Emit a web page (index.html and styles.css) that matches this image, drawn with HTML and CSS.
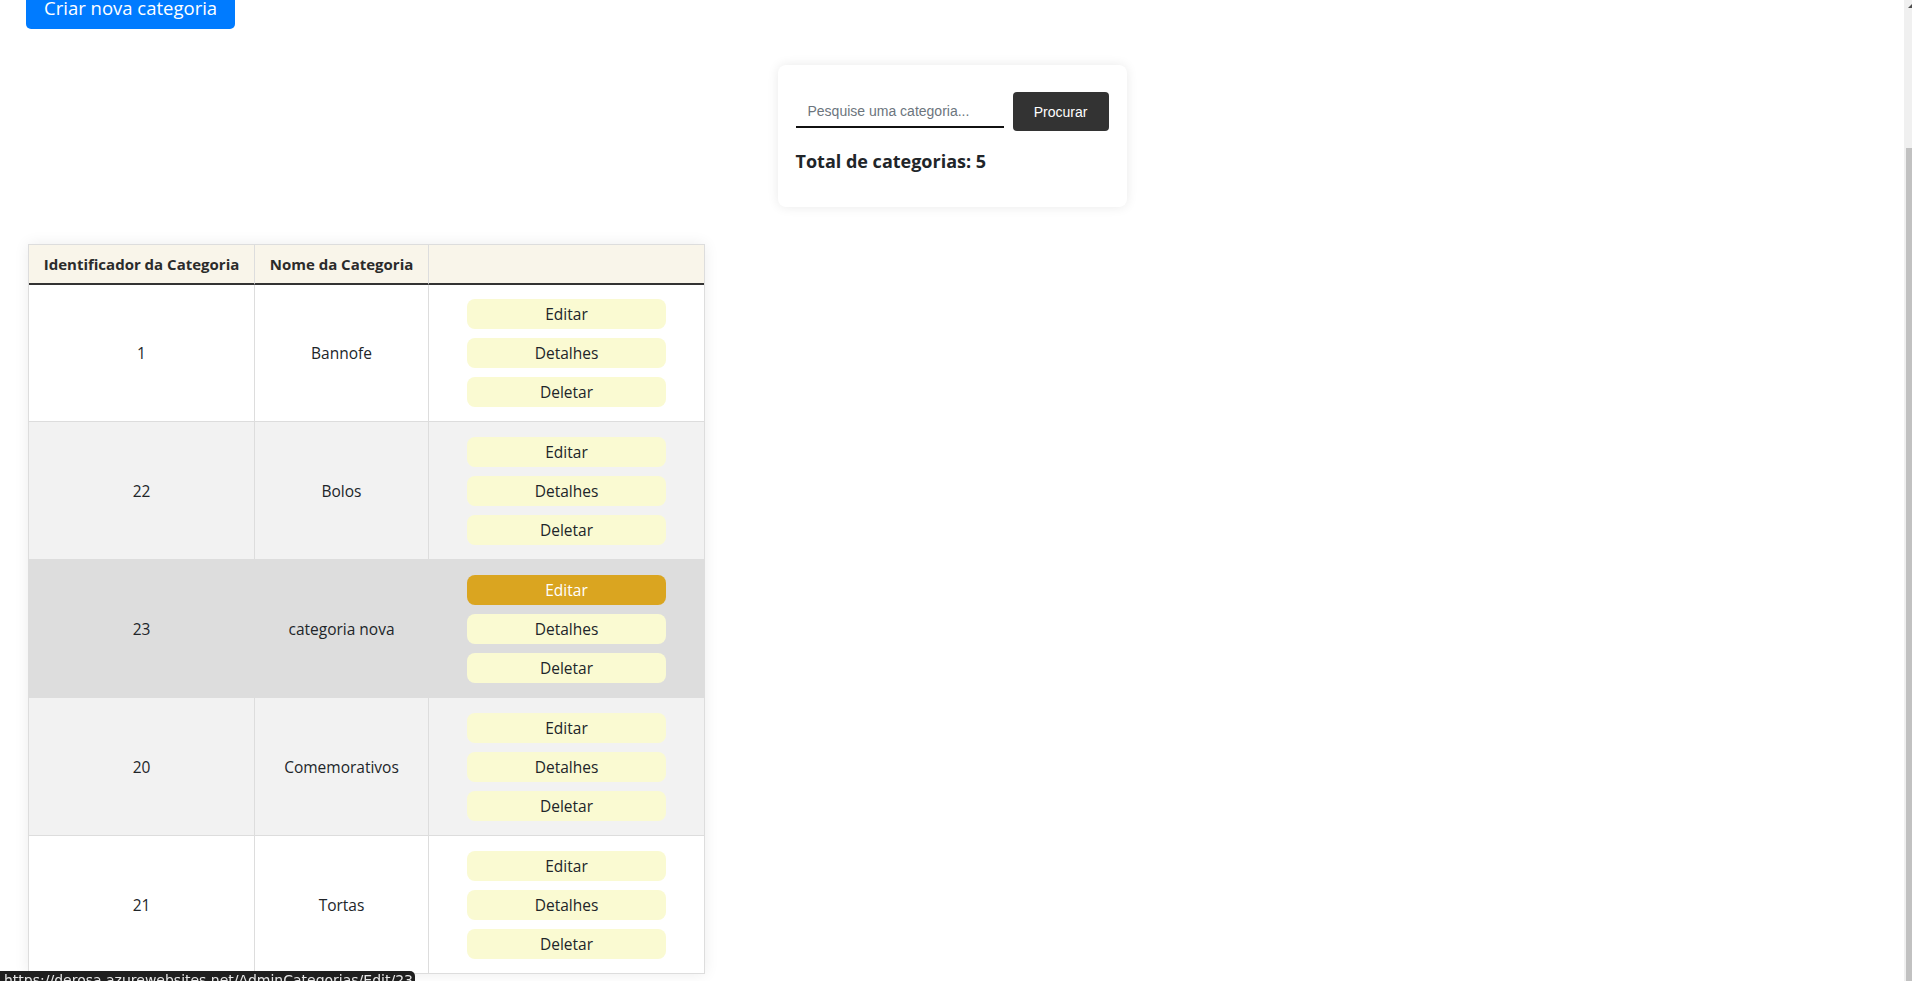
FILE: index.html
```html
<!DOCTYPE html>
<html lang="pt-BR">
<head>
<meta charset="utf-8">
<title>Categorias</title>
<link rel="stylesheet" href="styles.css">
</head>
<body>
<header class="site-header"></header>
<main class="page">
  <a class="btn-create" href="#">Criar nova categoria</a>

  <section class="search-card">
    <form class="search-form">
      <input class="search-input" type="text" placeholder="Pesquise uma categoria...">
      <button class="search-btn" type="button">Procurar</button>
    </form>
    <h5 class="total">Total de categorias: 5</h5>
  </section>

  <table class="cat-table">
    <thead>
      <tr>
        <th class="col-id">Identificador da Categoria</th>
        <th class="col-name">Nome da Categoria</th>
        <th class="col-actions"></th>
      </tr>
    </thead>
    <tbody>
      <tr>
        <td>1</td>
        <td>Bannofe</td>
        <td><div class="actions"><a class="act" href="#">Editar</a><a class="act" href="#">Detalhes</a><a class="act" href="#">Deletar</a></div></td>
      </tr>
      <tr class="row-alt">
        <td>22</td>
        <td>Bolos</td>
        <td><div class="actions"><a class="act" href="#">Editar</a><a class="act" href="#">Detalhes</a><a class="act" href="#">Deletar</a></div></td>
      </tr>
      <tr class="row-hover">
        <td>23</td>
        <td>categoria nova</td>
        <td><div class="actions"><a class="act act-active" href="#">Editar</a><a class="act" href="#">Detalhes</a><a class="act" href="#">Deletar</a></div></td>
      </tr>
      <tr class="row-alt">
        <td>20</td>
        <td>Comemorativos</td>
        <td><div class="actions"><a class="act" href="#">Editar</a><a class="act" href="#">Detalhes</a><a class="act" href="#">Deletar</a></div></td>
      </tr>
      <tr>
        <td>21</td>
        <td>Tortas</td>
        <td><div class="actions"><a class="act" href="#">Editar</a><a class="act" href="#">Detalhes</a><a class="act" href="#">Deletar</a></div></td>
      </tr>
    </tbody>
  </table>
</main>

<div class="fake-scrollbar"><span class="sb-arrow"></span><span class="sb-thumb"></span></div>
<div class="status-bubble">https://derosa.azurewebsites.net/AdminCategorias/Edit/23</div>
<script src="script.js"></script>
</body>
</html>
```

FILE: styles.css
```css
html {
  overflow: hidden;
}

body {
  margin: 0;
  padding-right: 8px;
  background: #fff;
  color: #212529;
  font-family: "Open Sans", "Liberation Sans", sans-serif;
  font-size: 15.5px;
}

.site-header {
  height: 161px;
}

.page {
  padding: 0 0 7px 0;
}

.btn-create {
  display: inline-block;
  margin-left: 26px;
  padding: 8px 18px;
  font-size: 18.5px;
  line-height: 26px;
  color: #fff;
  background: #007bff;
  border-radius: 5px;
  text-decoration: none;
}

.search-card {
  box-sizing: border-box;
  width: 349px;
  height: 142px;
  margin: 36px auto 0;
  padding: 27px 18px 0;
  background: #fff;
  border-radius: 8px;
  box-shadow: 0 0 12px rgba(0, 0, 0, 0.09);
}

.search-form {
  display: flex;
  align-items: center;
  gap: 9px;
  height: 39px;
  margin: 0;
}

.search-input {
  box-sizing: border-box;
  width: 208px;
  height: 32px;
  padding: 0 12px;
  border: none;
  border-bottom: 2px solid #111;
  outline: none;
  font-family: "Liberation Sans", Arial, sans-serif;
  font-size: 14px;
  color: #333;
  background: transparent;
}

.search-input::placeholder {
  color: #6c757d;
}

.search-btn {
  width: 96px;
  height: 39px;
  border: none;
  border-radius: 4px;
  background: #333;
  color: #fff;
  font-family: "Liberation Sans", Arial, sans-serif;
  font-size: 14px;
}

.total {
  margin: 20px 0 0;
  font-size: 18px;
  line-height: 21.6px;
  font-weight: 700;
  color: #212529;
}

.cat-table {
  margin: 37px 0 0 28px;
  width: 677px;
  table-layout: fixed;
  border-collapse: separate;
  border-spacing: 0;
  border: 1px solid #ddd;
  box-shadow: 0 0 14px rgba(0, 0, 0, 0.08);
}

.cat-table th {
  box-sizing: border-box;
  height: 40px;
  padding: 0 12px;
  background: #f9f5ea;
  border-bottom: 2px solid #333;
  font-size: 15px;
  font-weight: 700;
  text-align: center;
  white-space: nowrap;
  color: #2b2b2b;
}

.cat-table th + th,
.cat-table td + td {
  border-left: 1px solid #ddd;
}

.col-id { width: 225px; }
.col-name { width: 174px; }
.col-actions { width: 276px; }

.cat-table td {
  padding: 14px 0 14px;
  text-align: center;
  vertical-align: middle;
}

.cat-table tbody tr + tr td {
  border-top: 1px solid #ddd;
  padding-top: 15px;
}

.row-alt td {
  background: #f2f2f2;
}

.row-hover td {
  background: #dddddd;
}

.actions {
  display: flex;
  flex-direction: column;
  align-items: center;
  gap: 9px;
}

.act {
  display: block;
  width: 199px;
  height: 30px;
  line-height: 30px;
  border-radius: 8px;
  background: #fafad2;
  color: #212529;
  text-decoration: none;
}

.act-active {
  background: #daa520;
  color: #fff;
}

.fake-scrollbar {
  position: fixed;
  top: 0;
  right: 0;
  width: 8px;
  height: 100vh;
  background: #f0f0f0;
}

.sb-arrow {
  position: absolute;
  top: 4px;
  right: 0;
  width: 0;
  height: 0;
  border-left: 4px solid transparent;
  border-bottom: 4px solid #505050;
}

.sb-thumb {
  position: absolute;
  top: 148px;
  bottom: 0;
  left: 2px;
  right: 0;
  background: #c1c1c1;
}

.status-bubble {
  position: fixed;
  left: 0;
  bottom: -12px;
  height: 22px;
  padding: 0 2px 0 4px;
  line-height: 18px;
  background: #1f1f1f;
  color: #e6e6e6;
  font-family: "DejaVu Sans", sans-serif;
  font-size: 14px;
  border-top-right-radius: 5px;
  white-space: nowrap;
}
```

FILE: script.js
```js
function scrollToEnd() {
  window.scrollTo(0, document.documentElement.scrollHeight);
}
scrollToEnd();
window.addEventListener('load', scrollToEnd);
```
